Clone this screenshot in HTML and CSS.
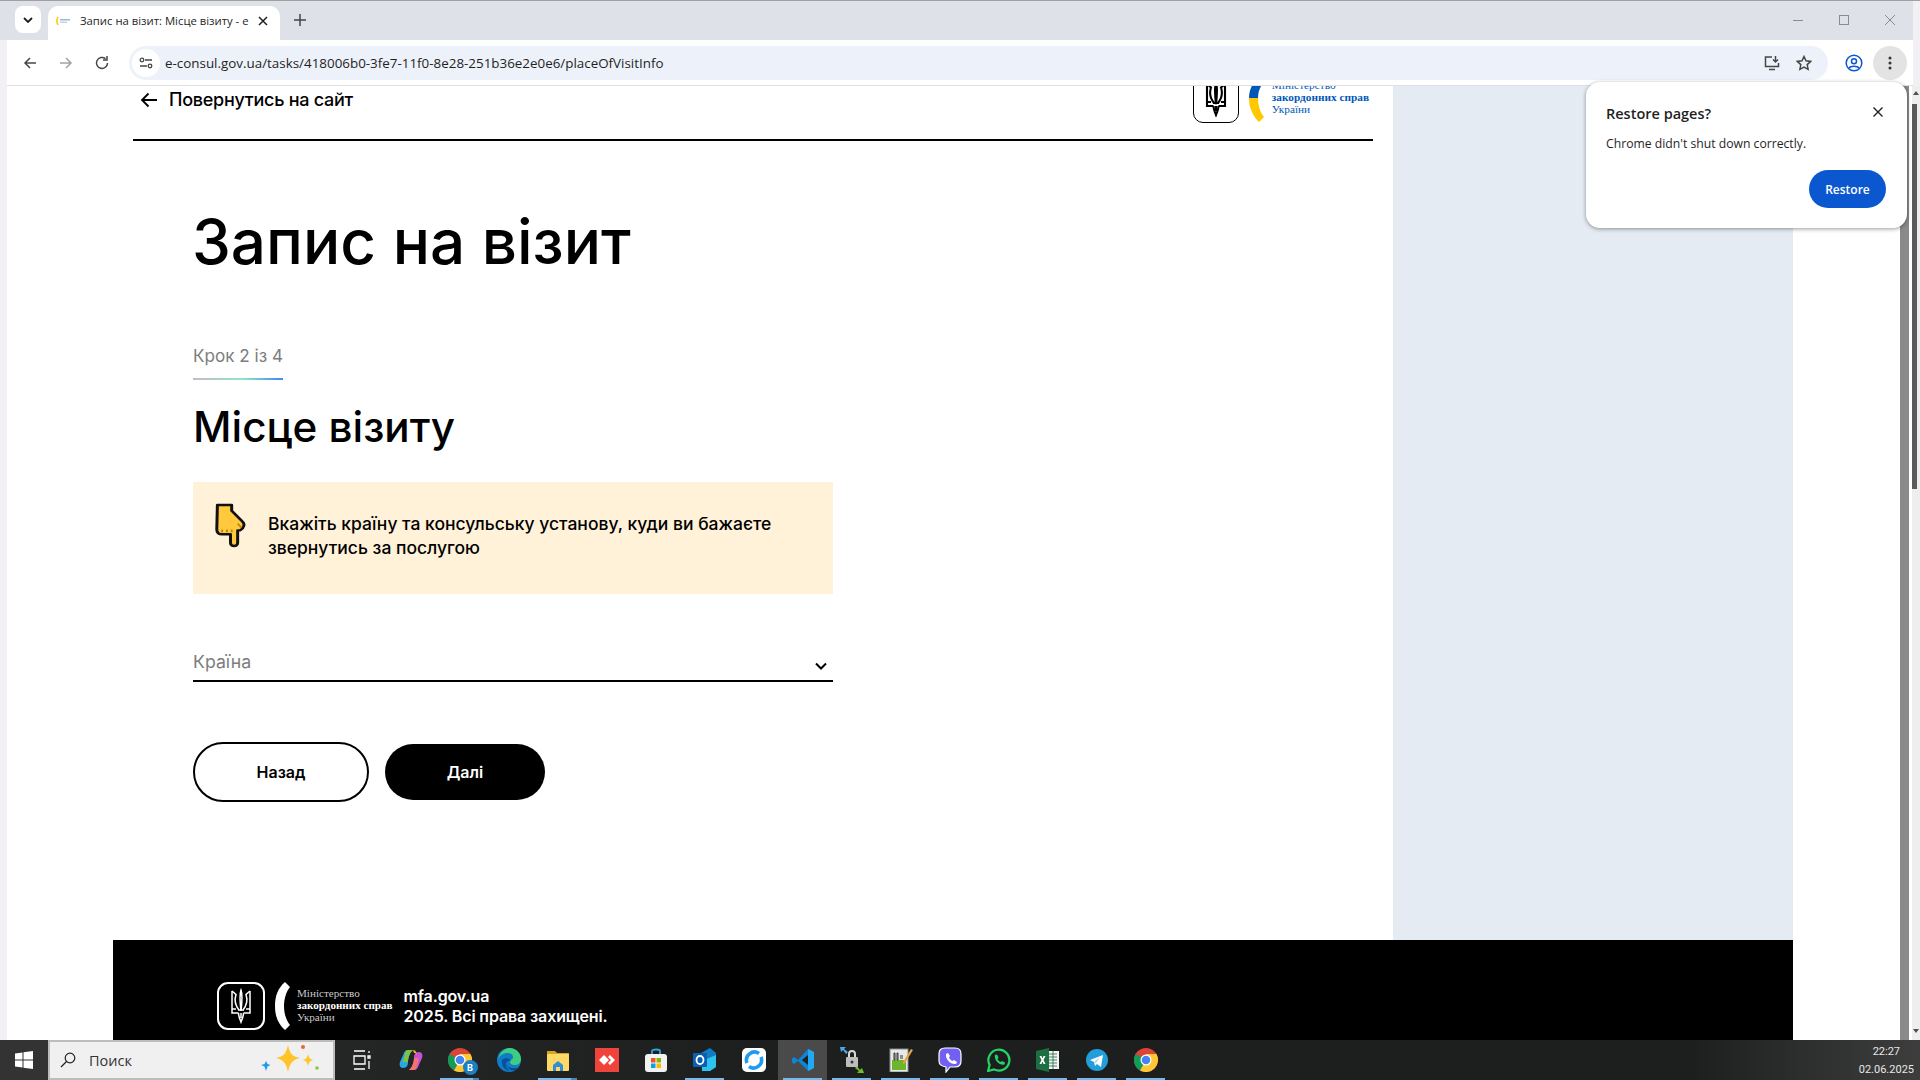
FILE: index.html
```html
<!DOCTYPE html>
<html lang="uk">
<head>
    <meta charset="UTF-8">
    <meta name="viewport" content="width=device-width, initial-scale=1.0">
    <title>Запис на візит: Місце візиту</title>
    <link rel="stylesheet" href="styles.css">
</head>
<body>
    <!-- Спільні іконки -->
    <svg class="defs" width="0" height="0">
        <symbol id="tryzub" viewBox="0 0 24 36">
            <g fill="none" stroke="currentColor">
                <path d="M3 3V25H9.500M21 3V25H14.500"/>
                <path d="M3 3L7 6.500C5.500 11 6 17 10 22M21 3L17 6.500C18.500 11 18 17 14 22"/>
                <path d="M12 2C10.500 6 10.800 13 12 23C13.200 13 13.500 6 12 2Z"/>
                <path d="M9 22H15M9.500 25C9.500 29 11 31 12 34C13 31 14.500 29 14.500 25M12 25V30"/>
                <path d="M3 21H7M21 21H17"/>
            </g>
        </symbol>
        <symbol id="chrome" viewBox="0 0 24 24">
            <circle cx="12" cy="12" r="12" fill="#db4437"/>
            <path d="M12 12 L1.600 6 A12 12 0 0 0 6 22.400 Z" fill="#0f9d58"/>
            <path d="M12 6 H22.400 A12 12 0 0 1 6 22.400 L12 12 Z" fill="#fcc934"/>
            <circle cx="12" cy="12" r="5.500" fill="#fff"/>
            <circle cx="12" cy="12" r="4.300" fill="#4285f4"/>
        </symbol>
    </svg>

    <div class="vikno">
        <!-- Вкладки браузера -->
        <div class="tabstrip">
            <div class="tab-search">
                <svg width="10" height="6" viewBox="0 0 10 6"><path d="M1 1l4 4 4-4" fill="none" stroke="#1f1f1f" stroke-width="1.800"/></svg>
            </div>
            <div class="tab">
                <svg class="tab-favicon" width="16" height="8" viewBox="0 0 16 8">
                    <path d="M2 0C.6 2.500.6 5.500 2 8" fill="none" stroke="#ffc800" stroke-width="1.500"/>
                    <rect x="4" y="2" width="10" height="1.500" fill="#9db8d8"/>
                    <rect x="4" y="4.500" width="7" height="1.500" fill="#c5d3e4"/>
                </svg>
                <span class="tab-title">Запис на візит: Місце візиту - e</span>
                <svg class="tab-close" width="10" height="10" viewBox="0 0 10 10"><path d="M1 1l8 8M9 1l-8 8" stroke="#1f1f1f" stroke-width="1.500"/></svg>
            </div>
            <svg class="tab-new" width="12" height="12" viewBox="0 0 12 12"><path d="M6 0v12M0 6h12" stroke="#444" stroke-width="1.500"/></svg>
            <div class="win-controls">
                <svg width="12" height="12" viewBox="0 0 12 12"><path d="M1 6.500h10" stroke="#8b8b8b"/></svg>
                <svg width="12" height="12" viewBox="0 0 12 12"><rect x="1.500" y="1.500" width="9" height="9" fill="none" stroke="#8b8b8b"/></svg>
                <svg width="12" height="12" viewBox="0 0 12 12"><path d="M1 1l10 10M11 1L1 11" stroke="#8b8b8b"/></svg>
            </div>
        </div>

        <!-- Панель адреси -->
        <div class="toolbar">
            <svg class="nav-ico" width="16" height="16" viewBox="0 0 16 16"><path d="M14 8H3M8 3L3 8l5 5" fill="none" stroke="#474747" stroke-width="1.500"/></svg>
            <svg class="nav-ico" width="16" height="16" viewBox="0 0 16 16"><path d="M2 8h11M8 3l5 5-5 5" fill="none" stroke="#a3a3a3" stroke-width="1.500"/></svg>
            <svg class="nav-ico" width="16" height="16" viewBox="0 0 16 16"><path d="M13.500 8A5.500 5.500 0 1 1 11.500 3.700M13 1v4H9" fill="none" stroke="#474747" stroke-width="1.500"/></svg>
            <div class="omnibox">
                <div class="site-info">
                    <svg width="14" height="14" viewBox="0 0 14 14"><path d="M6 4h7M1 10h7" stroke="#474747" stroke-width="1.300"/><circle cx="3" cy="4" r="1.800" fill="none" stroke="#474747" stroke-width="1.300"/><circle cx="11" cy="10" r="1.800" fill="none" stroke="#474747" stroke-width="1.300"/></svg>
                </div>
                <span class="url">e-consul.gov.ua/tasks/418006b0-3fe7-11f0-8e28-251b36e2e0e6/placeOfVisitInfo</span>
                <div class="omni-icons">
                    <svg width="18" height="18" viewBox="0 0 18 18"><path d="M9 3H2.500v9.500h13V9M12.500 2v6M10 5.500L12.500 8 15 5.500M6 15.500h6" fill="none" stroke="#474747" stroke-width="1.500"/></svg>
                    <svg width="16" height="16" viewBox="0 0 16 16"><path d="M8 1.500l2 4.300 4.700.6-3.500 3.200.9 4.700L8 12l-4.100 2.300.9-4.700L1.300 6.400 6 5.800z" fill="none" stroke="#474747" stroke-width="1.500"/></svg>
                </div>
            </div>
            <svg class="profile" width="18" height="18" viewBox="0 0 18 18"><circle cx="9" cy="9" r="7.800" fill="none" stroke="#0b57d0" stroke-width="1.500"/><circle cx="9" cy="7.200" r="2.500" fill="none" stroke="#0b57d0" stroke-width="1.500"/><path d="M4 14c1.500-2.500 8.500-2.500 10 0" fill="none" stroke="#0b57d0" stroke-width="1.500"/></svg>
            <div class="menu-btn">
                <svg width="4" height="14" viewBox="0 0 4 14"><circle cx="2" cy="2" r="1.500" fill="#333"/><circle cx="2" cy="7" r="1.500" fill="#333"/><circle cx="2" cy="12" r="1.500" fill="#333"/></svg>
            </div>
        </div>

        <!-- Сторінка -->
        <div class="viewport">
            <div class="sitewrap">
                <div class="site-row">
                    <main class="main">
                        <header class="site-head">
                            <a class="back-link">
                                <svg width="18" height="16" viewBox="0 0 18 16"><path d="M17 8H2M8.500 1.500L2 8l6.500 6.500" fill="none" stroke="#000" stroke-width="1.800"/></svg>
                                Повернутись на сайт
                            </a>
                            <div class="logo logo-color">
                                <div class="logo-box"><svg class="tryzub" width="24" height="36"><use href="#tryzub"/></svg></div>
                                <svg class="logo-arc" width="16" height="46" viewBox="0 0 16 46">
                                    <path d="M15 0C6 4 1 12 1 22h9C10 16 12 11 15 7z" fill="#0057b8"/>
                                    <path d="M1 22C1 32 5 40 11 46l5-5C12 36 10 29 10 22z" fill="#ffc800"/>
                                </svg>
                                <div class="logo-text">
                                    <span>Міністерство</span>
                                    <b>закордонних справ</b>
                                    <span>України</span>
                                </div>
                            </div>
                        </header>

                        <section class="visit">
                            <h1>Запис на візит</h1>
                            <div class="krok">Крок 2 із 4</div>
                            <h2>Місце візиту</h2>
                            <div class="notice">
                                <svg class="notice-hand" width="31" height="45" viewBox="0 0 26 46" preserveAspectRatio="none">
                                    <path d="M2 2H14L14 8L23 19C25 21 25 25 21 28H19V41C19 45 13 45 13 41V32H6C3 32 1.500 30 1.500 27Z" fill="#ffc83d" stroke="#111" stroke-width="2.500" stroke-linejoin="round"/>
                                    <path d="M6 27v3M10 27v3M14 27v3M19 21l3 4" stroke="#b8860b" stroke-width="1.500"/>
                                </svg>
                                <p>Вкажіть країну та консульську установу, куди ви бажаєте звернутись за послугою</p>
                            </div>
                            <div class="select-field">
                                <span>Країна</span>
                                <svg width="12" height="8" viewBox="0 0 12 8"><path d="M1 1.500l5 5 5-5" fill="none" stroke="#000" stroke-width="2"/></svg>
                            </div>
                            <div class="buttons">
                                <button class="btn btn-back">Назад</button>
                                <button class="btn btn-next">Далі</button>
                            </div>
                        </section>
                    </main>
                    <aside class="side"></aside>
                </div>
                <footer class="site-foot">
                    <div class="logo logo-white">
                        <div class="logo-box"><svg class="tryzub" width="24" height="36"><use href="#tryzub"/></svg></div>
                        <svg class="logo-arc" width="16" height="48" viewBox="0 0 16 48"><path d="M11 0C4 6 1 14 1 24s3 18 10 24l5-5C12 38 10 31 10 24s2-14 6-19z" fill="#fff"/></svg>
                        <div class="logo-text">
                            <span>Міністерство</span>
                            <b>закордонних справ</b>
                            <span>України</span>
                        </div>
                    </div>
                    <div class="foot-text">
                        <div>mfa.gov.ua</div>
                        <div>2025. Всі права захищені.</div>
                    </div>
                </footer>
            </div>

            <div class="page-strip"></div>
            <div class="scrollbar"><div class="scroll-thumb"></div></div>
        </div>

        <!-- Спливаюче вікно Chrome -->
        <div class="restore-popup">
            <svg class="restore-close" width="10" height="10" viewBox="0 0 10 10"><path d="M.5.500l9 9M9.500.500l-9 9" stroke="#1f1f1f" stroke-width="1.400"/></svg>
            <div class="restore-title">Restore pages?</div>
            <div class="restore-text">Chrome didn't shut down correctly.</div>
            <div class="restore-actions"><button class="restore-btn">Restore</button></div>
        </div>
    </div>

    <!-- Панель задач Windows -->
    <div class="taskbar">
        <div class="start">
            <svg width="18" height="18" viewBox="0 0 18 18"><path d="M0 2.500L7.500 1.400V8.500H0zM8.500 1.200L18 0V8.500H8.500zM0 9.500H7.500V16.600L0 15.500zM8.500 9.500H18V18L8.500 16.800z" fill="#fff"/></svg>
        </div>
        <div class="search">
            <svg width="16" height="16" viewBox="0 0 16 16"><circle cx="10" cy="6" r="4.800" fill="none" stroke="#222" stroke-width="1.200"/><path d="M6.500 9.500L1 15" stroke="#222" stroke-width="1.200"/></svg>
            <span>Поиск</span>
            <svg class="search-spark" width="62" height="30" viewBox="0 0 62 30">
                <path d="M28 1c2 9 4 11 12 13-8 2-10 5-12 14-2-9-4-12-12-14 8-2 10-4 12-13z" fill="#ffc528"/>
                <path d="M48 10c1 4 2 5 5 6-3 1-4 2-5 6-1-4-2-5-5-6 3-1 4-2 5-6z" fill="#ffc528"/>
                <path d="M6 17l1.500 3 3 1-3 1.500L6 27l-1.500-4.500L1 21l3.500-1z" fill="#1e9bf0"/>
                <circle cx="43" cy="3" r="2" fill="#f0642d"/>
                <circle cx="57" cy="24" r="1.800" fill="#8cc63f"/>
            </svg>
        </div>
        <div class="task-item">
            <svg width="20" height="20" viewBox="0 0 20 20"><path d="M2 1h11M2 19h11M2 6h11v8H2zM16 6h2v2h-2zM17 1v2M17 11v8" fill="none" stroke="#fff" stroke-width="1.300"/></svg>
        </div>
        <div class="task-item">
            <svg width="24" height="24" viewBox="0 0 24 24"><path d="M9 2h5c-3 2-5 8-5 12 0 3-1 6-5 6-3 0-4-3-3-6L5 5c.6-2 2-3 4-3z" fill="#2aa7e0"/><path d="M9 2h5c-3 2-5 8-5 12H4L6 6c.5-2 1.500-4 3-4z" fill="#7fc241"/><path d="M15 22h-5c3-2 5-8 5-12 0-3 1-6 5-6 3 0 4 3 3 6l-4 9c-.6 2-2 3-4 3z" fill="#c552d8"/><path d="M15 22h-5c3-2 5-8 5-12h5l-2 8c-.5 2-1.500 4-3 4z" fill="#f2746a"/><path d="M14 2c2 0 3 1 3.500 3l.5 2c-1-2-2-2-3-2z" fill="#f7b500"/></svg>
        </div>
        <div class="task-item running split">
            <div class="badge-wrap">
                <svg width="24" height="24"><use href="#chrome"/></svg>
                <span class="letter-badge">B</span>
            </div>
        </div>
        <div class="task-item">
            <svg width="24" height="24" viewBox="0 0 24 24"><circle cx="12" cy="12" r="12" fill="#0f7cc4"/><path d="M1 12C2 5 7 0 13 0c6 0 11 5 11 11 0 4-3 6-6 6-4 0-5-2-5-3 0-3 3-2 3-5 0-3-3-4-6-4-4 0-8 3-9 7z" fill="#3ecb82"/><path d="M10 15c0 4 3 8 8 7 1 0 2-1 3-2-4 1-11 1-11-5z" fill="#0b3f7f"/><path d="M5 12c3-3 8-2 9 1-2-1-5 0-5 3 0 3 2 6 4 7-5 0-9-5-8-11z" fill="#0b4f9e"/></svg>
        </div>
        <div class="task-item running split">
            <svg width="24" height="22" viewBox="0 0 24 22"><path d="M1 2h8l2 2h12v4H1z" fill="#d9a520"/><rect x="1" y="5" width="22" height="17" rx="1" fill="#ffd966"/><path d="M7 22v-6l5-4 5 4v6h-3v-4h-4v4z" fill="#2f8fd8"/></svg>
        </div>
        <div class="task-item">
            <div class="anydesk"><svg width="16" height="10" viewBox="0 0 16 10"><path d="M5 0l5 5-5 5-5-5z" fill="#fff"/><path d="M11 0l5 5-5 5-2-2 3-3-3-3z" fill="#fff"/></svg></div>
        </div>
        <div class="task-item">
            <svg width="24" height="24" viewBox="0 0 24 24"><path d="M8 7V3c0-2 8-2 8 0v4" fill="none" stroke="#2aa7e0" stroke-width="1.800"/><rect x="1" y="6" width="22" height="18" rx="3" fill="#f2f2f2"/><rect x="7" y="10" width="4.500" height="4.500" fill="#f25022"/><rect x="12.500" y="10" width="4.500" height="4.500" fill="#7fba00"/><rect x="7" y="15.500" width="4.500" height="4.500" fill="#00a4ef"/><rect x="12.500" y="15.500" width="4.500" height="4.500" fill="#ffb900"/></svg>
        </div>
        <div class="task-item running">
            <svg width="24" height="24" viewBox="0 0 24 24"><path d="M8 5l9-5 6 5v14l-6 4H9z" fill="#0f7cc4"/><path d="M9 13l14-6v12l-6 4H9z" fill="#2ec3ec"/><rect x="0" y="5" width="14" height="14" rx="1" fill="#0a5fb4"/><ellipse cx="7" cy="12" rx="3.500" ry="4" fill="none" stroke="#fff" stroke-width="1.800"/></svg>
        </div>
        <div class="task-item">
            <div class="app-round"><svg width="20" height="20" viewBox="0 0 20 20"><path d="M3 13A8 8 0 0 1 15 3.500M17 7A8 8 0 0 1 5 16.500" fill="none" stroke="#1e9bf0" stroke-width="3.500"/></svg></div>
        </div>
        <div class="task-item active running">
            <svg width="24" height="24" viewBox="0 0 24 24"><path d="M17 1l6 3v16l-6 3-10-10-4 3-2-1.500V10.500L3 9l4 3z" fill="#0e84d4"/><path d="M17 1l6 3v16l-6 3z" fill="#23a9f2"/><path d="M17 7l-6 5 6 5z" fill="#1f1f1f"/></svg>
        </div>
        <div class="task-item running">
            <svg width="24" height="26" viewBox="0 0 24 26"><path d="M0 0h6l-2 2 4 3-2 2-3-4-2 2z" fill="#4fa8e8"/><path d="M24 26h-7l2-2-4-3 2-2 3 4 2-2z" fill="#6cc02c"/><rect x="6" y="10" width="12" height="10" rx="1" fill="#bdbdbd"/><path d="M9 10V7c0-4 6-4 6 0v3" fill="none" stroke="#d8d8d8" stroke-width="2"/><circle cx="12" cy="15" r="1.500" fill="#333"/></svg>
        </div>
        <div class="task-item running">
            <svg width="24" height="24" viewBox="0 0 24 24"><rect x="1" y="1" width="18" height="23" fill="#e8e8e8" stroke="#8a8a8a"/><rect x="3" y="12" width="14" height="10" fill="#6cb52d"/><path d="M5 5h1v7H5zM8 5h1v7H8zM11 8h3M11 10h3" stroke="#333" fill="none"/><path d="M22 1l2 1-8 13-2 1 0-2z" fill="#e8a33d"/></svg>
        </div>
        <div class="task-item running">
            <svg width="24" height="26" viewBox="0 0 24 26"><path d="M7 1h10c4 0 6 2 6 6v7c0 4-2 6-6 6h-5l-4 5v-5c-4-1-7-2-7-6V7c0-4 2-6 6-6z" fill="#7360f2" stroke="#fff" stroke-width="1.200"/><path d="M8 7l2-1 2 3-1 1.500c.8 2 2 3 3.500 3.500l1.500-1 3 2-1 2c-5 1-11-5-10-10z" fill="#fff"/></svg>
        </div>
        <div class="task-item running">
            <svg width="24" height="24" viewBox="0 0 24 24"><path d="M1 23l1.600-6A10.500 10.500 0 1 1 7 21.400z" fill="none" stroke="#25d366" stroke-width="2.200"/><path d="M8 7l2-.5 1.500 3-1 1.500c.8 1.500 2 2.500 3 3l1.500-1 3 1.500-.5 2c-4 1.500-11-4-9.500-9.500z" fill="#25d366"/></svg>
        </div>
        <div class="task-item running">
            <svg width="24" height="24" viewBox="0 0 24 24"><rect x="10" y="3" width="13" height="18" fill="#f2f2f2"/><path d="M13 6h8M13 9h8M13 12h8M13 15h8M13 18h8M17 3v18" stroke="#1d6f42" stroke-width=".8"/><path d="M0 3l13-3v24L0 21z" fill="#1d6f42"/><path d="M3.500 8l2 4-2 4h2l1-2.500 1 2.500h2l-2-4 2-4h-2l-1 2.500L5.500 8z" fill="#fff"/></svg>
        </div>
        <div class="task-item running">
            <svg width="22" height="22" viewBox="0 0 22 22"><circle cx="11" cy="11" r="11" fill="#229ed9"/><path d="M4 11l13-5-2 12-4-3-2 2-1-4z" fill="#fff"/><path d="M8 13l6-5-4 6z" fill="#a9d3ea"/></svg>
        </div>
        <div class="task-item running">
            <svg width="24" height="24"><use href="#chrome"/></svg>
        </div>
        <div class="clock">
            <div>22:27</div>
            <div>02.06.2025</div>
        </div>
    </div>
</body>
</html>
```

FILE: styles.css
```css
* {
    box-sizing: border-box;
}

html, body {
    margin: 0;
    height: 100%;
    overflow: hidden;
}

body {
    display: flex;
    flex-direction: column;
    background-color: #fff;
    font-family: Inter, "Liberation Sans", sans-serif;
    color: #000;
}

svg {
    display: block;
    flex-shrink: 0;
}

.defs {
    position: absolute;
}

.vikno {
    flex: 1;
    min-height: 0;
    display: flex;
    flex-direction: column;
    position: relative;
    border-top: 1px solid #a0a0a0;
    background-color: #f3f0f5;
}

/* Вкладки браузера */
.tabstrip {
    height: 39px;
    margin-right: 7px;
    display: flex;
    align-items: flex-end;
    background-color: #dee1e8;
    padding-left: 15px;
    flex-shrink: 0;
}

.tab-search {
    width: 26px;
    height: 27px;
    margin-bottom: 7px;
    background-color: #fff;
    border-radius: 8px;
    display: flex;
    align-items: center;
    justify-content: center;
}

.tab {
    width: 232px;
    height: 34px;
    margin-left: 7px;
    padding: 0 12px 5px 8px;
    background-color: #fff;
    border-radius: 10px 10px 0 0;
    display: flex;
    align-items: center;
}

.tab-favicon {
    margin-right: 8px;
}

.tab-title {
    flex: 1;
    min-width: 0;
    white-space: nowrap;
    font-family: "Open Sans", sans-serif;
    font-size: 11.300px;
    color: #1f1f1f;
}

.tab-close {
    margin-left: 6px;
}

.tab-new {
    margin: 0 0 14px 14px;
}

.win-controls {
    margin: 0 17px 14px auto;
    display: flex;
    gap: 34px;
}

/* Панель адреси */
.toolbar {
    height: 46px;
    margin: 0 7px;
    flex-shrink: 0;
    display: flex;
    align-items: center;
    padding-left: 15px;
    background-color: #fff;
    border-bottom: 1px solid #e0e0e0;
}

.nav-ico {
    margin-right: 20px;
}

.nav-ico:nth-child(3) {
    margin-right: 19px;
}

.omnibox {
    width: 1699px;
    height: 34px;
    padding: 0 16px 0 3px;
    border-radius: 17px;
    background-color: #edf2fa;
    display: flex;
    align-items: center;
}

.site-info {
    width: 28px;
    height: 28px;
    border-radius: 50%;
    background-color: #fff;
    display: flex;
    align-items: center;
    justify-content: center;
    margin-right: 5px;
}

.url {
    font-family: "Open Sans", sans-serif;
    font-size: 13.400px;
    color: #1f1f1f;
    white-space: nowrap;
}

.omni-icons {
    margin-left: auto;
    display: flex;
    align-items: center;
    gap: 15px;
}

.profile {
    margin-left: 17px;
}

.menu-btn {
    width: 34px;
    height: 34px;
    margin-left: 10px;
    border-radius: 50%;
    background-color: #e3e3e3;
    display: flex;
    align-items: center;
    justify-content: center;
}

/* Сторінка */
.viewport {
    flex: 1;
    min-height: 0;
    position: relative;
    overflow: hidden;
    padding-left: 113px;
    background-color: #fff;
}

.viewport::before {
    content: "";
    position: absolute;
    left: 0;
    top: 0;
    bottom: 0;
    width: 7px;
    background-color: #f3f0f5;
}

.sitewrap {
    width: 1680px;
}

.site-row {
    display: flex;
    height: 854px;
}

.main {
    width: 1280px;
    padding: 0 20px;
    background-color: #fff;
}

.side {
    width: 400px;
    background-color: #e4ebf3;
}

.site-head {
    height: 55px;
    border-bottom: 2px solid #000;
    display: flex;
    justify-content: space-between;
    align-items: flex-end;
}

.back-link {
    display: flex;
    align-items: center;
    gap: 11px;
    margin: 0 0 27px 7px;
    font-size: 18px;
    line-height: 24px;
    font-weight: 500;
    letter-spacing: -0.26px;
}

/* Логотип МЗС */
.logo {
    display: flex;
    align-items: center;
}

.logo-color {
    margin: 0 4px 16px 0;
    height: 48px;
    color: #000;
}

.logo-box {
    width: 48px;
    height: 48px;
    border: 1px solid currentColor;
    border-radius: 10px;
    display: flex;
    align-items: center;
    justify-content: center;
}

.logo-color .logo-box {
    width: 46px;
}

.tryzub {
    stroke-width: 1.500;
}

.logo-color .tryzub {
    stroke-width: 2.100;
}

.logo-arc {
    margin-left: 9px;
}

.logo-text {
    margin-left: 8px;
    display: flex;
    flex-direction: column;
    font-family: "Liberation Serif", serif;
    font-size: 11.300px;
    line-height: 12px;
    white-space: nowrap;
}

.logo-color .logo-text {
    color: #0057b8;
    padding-bottom: 4px;
}

.logo-white {
    color: #fff;
}

.logo-white .logo-text {
    font-size: 11.100px;
    margin-left: 7px;
    padding-bottom: 2px;
}

.logo-white .logo-text span {
    color: #c9c9c9;
}

.logo-white .logo-box {
    border-width: 2px;
    border-radius: 11px;
}

/* Форма */
.visit {
    padding-left: 60px;
}

h1 {
    margin: 0 0 0 -1px;
    padding-top: 66px;
    font-size: 62px;
    line-height: 70px;
    font-weight: 500;
}

.krok {
    display: inline-block;
    margin-top: 68px;
    padding-bottom: 12px;
    font-size: 17.100px;
    line-height: 21px;
    color: #7d7d7d;
    border-bottom: 2px solid;
    border-image: linear-gradient(90deg, #c9b8c8, #8fe6c8 55%, #3d86f5) 1;
}

h2 {
    margin: 21px 0 0;
    font-size: 42.200px;
    line-height: 52px;
    font-weight: 500;
}

.notice {
    width: 640px;
    height: 112px;
    margin-top: 29px;
    padding: 21px 24px 0 22px;
    background-color: #fff2d9;
    display: flex;
    align-items: flex-start;
    gap: 22px;
}

.notice p {
    margin: 9px 0 0;
    font-size: 17.500px;
    line-height: 24px;
    font-weight: 500;
}

.select-field {
    width: 640px;
    height: 34px;
    margin-top: 54px;
    padding: 0 6px 6px 0;
    border-bottom: 2px solid #000;
    display: flex;
    align-items: center;
    justify-content: space-between;
    font-size: 17.700px;
    color: #7d7d7d;
}

.select-field svg {
    margin-top: 10px;
}

.buttons {
    margin-top: 60px;
    display: flex;
    align-items: center;
    gap: 16px;
}

.btn {
    font-family: inherit;
    font-size: 16px;
    font-weight: 600;
    border-radius: 30px;
}

.btn-back {
    width: 176px;
    height: 60px;
    background-color: #fff;
    color: #000;
    border: 2px solid #000;
}

.btn-next {
    width: 160px;
    height: 56px;
    background-color: #000;
    color: #fff;
    border: 0;
}

/* Футер */
.site-foot {
    height: 120px;
    padding: 42px 0 0 104px;
    background-color: #000;
    display: flex;
    align-items: flex-start;
    gap: 11px;
}

.foot-text {
    color: #fff;
    font-size: 16px;
    line-height: 20px;
    font-weight: 600;
    letter-spacing: -0.12px;
    margin-top: 4px;
}

/* Смуга прокрутки */
.page-strip {
    position: absolute;
    left: 1900px;
    top: 0;
    bottom: 0;
    width: 9px;
    background-color: #8a8a8a;
}

.scrollbar {
    position: absolute;
    right: 0;
    top: 0;
    bottom: 0;
    width: 8px;
    background-color: #eeeeee;
}

.scrollbar::before,
.scrollbar::after {
    content: "";
    position: absolute;
    left: 1px;
    border-left: 3px solid transparent;
    border-right: 3px solid transparent;
}

.scrollbar::before {
    top: 5px;
    border-bottom: 4px solid #505050;
}

.scrollbar::after {
    bottom: 7px;
    border-top: 4px solid #505050;
}

.scroll-thumb {
    margin-top: 18px;
    width: 5px;
    height: 385px;
    background-color: #5a5a5a;
}

/* Спливаюче вікно */
.restore-popup {
    position: absolute;
    left: 1586px;
    top: 81px;
    width: 321px;
    height: 146px;
    padding: 22px 21px 0 20px;
    background-color: #fff;
    border-radius: 14px;
    box-shadow: 0 1px 4px rgba(0,0,0,0.4);
    font-family: "Open Sans", sans-serif;
    color: #1f1f1f;
}

.restore-close {
    position: absolute;
    top: 25px;
    right: 24px;
}

.restore-title {
    font-size: 14.500px;
    line-height: 20px;
    font-weight: 600;
}

.restore-text {
    margin-top: 11px;
    font-size: 12.200px;
    line-height: 18px;
}

.restore-actions {
    margin-top: 17px;
    display: flex;
    justify-content: flex-end;
}

.restore-btn {
    width: 77px;
    height: 38px;
    border: 0;
    border-radius: 19px;
    background-color: #0b57d0;
    color: #fff;
    font-family: inherit;
    font-size: 12px;
    font-weight: 600;
}

/* Панель задач */
.taskbar {
    height: 40px;
    flex-shrink: 0;
    display: flex;
    align-items: stretch;
    background: linear-gradient(90deg, #2a2a2a 0, #1d1f1f 40%, #1d1f1f 88%, #3d3d3d 100%);
    color: #fff;
}

.start {
    width: 48px;
    background-color: #333;
    display: flex;
    align-items: center;
    justify-content: center;
}

.search {
    width: 287px;
    margin-right: 2px;
    padding-left: 10px;
    background-color: #f0f0f0;
    border: 2px solid #bdbdbd;
    display: flex;
    align-items: center;
    color: #333;
    font-family: "Open Sans", sans-serif;
    font-size: 14.500px;
    position: relative;
}

.search span {
    margin-left: 13px;
}

.search-spark {
    position: absolute;
    right: 11px;
    top: 2px;
}

.task-item {
    width: 49px;
    display: flex;
    align-items: center;
    justify-content: center;
    position: relative;
}

.task-item.active {
    background-color: #4a4a4a;
}

.task-item.running::after {
    content: "";
    position: absolute;
    left: 5px;
    right: 5px;
    bottom: 0;
    height: 2px;
    background-color: #76b9ed;
}

.task-item.split::before {
    content: "";
    position: absolute;
    right: 5px;
    bottom: 0;
    width: 6px;
    height: 2px;
    background-color: #4b86ad;
    z-index: 1;
}

.badge-wrap {
    position: relative;
}

.letter-badge {
    position: absolute;
    right: -6px;
    bottom: -3px;
    width: 15px;
    height: 15px;
    border-radius: 50%;
    background-color: #1a7fc4;
    color: #fff;
    font-size: 9px;
    font-weight: 700;
    line-height: 15px;
    text-align: center;
}

.anydesk {
    width: 24px;
    height: 24px;
    background-color: #ef443b;
    display: flex;
    align-items: center;
    justify-content: center;
}

.app-round {
    width: 24px;
    height: 24px;
    border-radius: 5px;
    background-color: #fff;
    display: flex;
    align-items: center;
    justify-content: center;
}

.clock {
    margin-left: auto;
    padding: 3px 6px 0 0;
    text-align: center;
    font-family: Roboto, sans-serif;
    font-size: 11px;
    line-height: 18px;
    color: #e8e8e8;
}
```
